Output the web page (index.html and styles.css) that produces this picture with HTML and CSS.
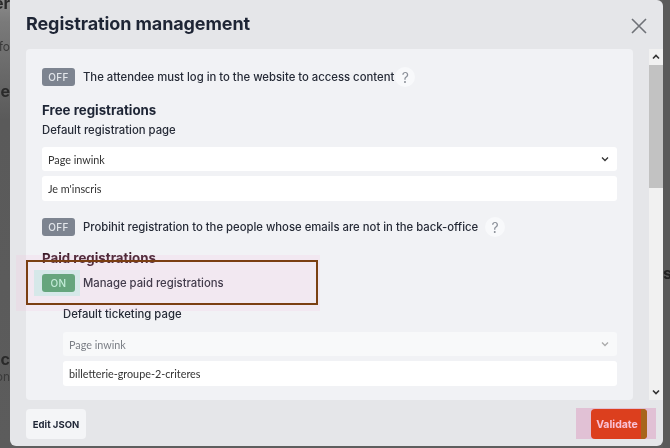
FILE: index.html
```html
<!DOCTYPE html>
<html lang="en">
<head>
<meta charset="utf-8">
<title>Registration management</title>
<link rel="stylesheet" href="styles.css">
</head>
<body>
<div class="page">
  <div class="page-left">
    <div class="bg-line bg-bold bg-top">Register</div>
    <div class="bg-line bg-small">Info</div>
    <div class="bg-line bg-bold bg-mid">The</div>
    <div class="bg-line bg-bold bg-low">Doc</div>
    <div class="bg-line bg-small">Non</div>
  </div>
  <div class="modal">
    <header class="modal-head">
      <h2 class="modal-title">Registration management</h2>
      <button class="close" aria-label="Close">
        <svg width="16" height="16" viewBox="0 0 16 16"><path d="M1 1 L15 15 M15 1 L1 15" stroke="#6f7278" stroke-width="1.6" fill="none"/></svg>
      </button>
    </header>
    <div class="modal-body">
      <div class="panel">
        <div class="toggle-row">
          <span class="toggle off">OFF</span>
          <span class="toggle-label">The attendee must log in to the website to access content</span>
          <span class="help help-1">?</span>
        </div>
        <h3 class="section-title">Free registrations</h3>
        <div class="field-label">Default registration page</div>
        <div class="select"><span>Page inwink</span><svg width="8" height="6" viewBox="0 0 8 6"><path d="M1 1.5 L4 4.5 L7 1.5" stroke="#333" stroke-width="1.3" fill="none"/></svg></div>
        <div class="input">Je m'inscris</div>
        <div class="toggle-row row-2">
          <span class="toggle off">OFF</span>
          <span class="toggle-label">Probihit registration to the people whose emails are not in the back-office</span>
          <span class="help">?</span>
        </div>
        <h3 class="section-title paid">Paid registrations</h3>
        <div class="toggle-row row-on">
          <span class="toggle on">ON</span>
          <span class="toggle-label">Manage paid registrations</span>
        </div>
        <div class="sub">
          <div class="field-label">Default ticketing page</div>
          <div class="select disabled"><span>Page inwink</span><svg width="8" height="6" viewBox="0 0 8 6"><path d="M1 1.5 L4 4.5 L7 1.5" stroke="#aaa" stroke-width="1.3" fill="none"/></svg></div>
          <div class="input">billetterie-groupe-2-criteres</div>
        </div>
      </div>
      <div class="scrollbar">
        <svg class="sb-arrow" width="8" height="6" viewBox="0 0 8 6"><path d="M1 4.5 L4 1.5 L7 4.5" stroke="#333" stroke-width="1.6" fill="none"/></svg>
        <div class="sb-thumb"></div>
        <div class="sb-track"></div>
        <svg class="sb-arrow" width="8" height="6" viewBox="0 0 8 6"><path d="M1 1.5 L4 4.5 L7 1.5" stroke="#333" stroke-width="1.6" fill="none"/></svg>
      </div>
    </div>
    <footer class="modal-foot">
      <button class="btn btn-light">Edit JSON</button>
      <button class="btn btn-primary">Validate</button>
    </footer>
  </div>
  <div class="page-right">
    <div class="bg-line bg-bold">s</div>
  </div>
</div>
<div class="hl-pink"></div>
<div class="hl-box"></div>
<div class="hl-cyan"></div>
<div class="hl-pink-btn"></div>
<div class="hl-brown-btn"></div>
</body>
</html>
```

FILE: styles.css
```css
* { box-sizing: border-box; }
html, body { margin: 0; padding: 0; }
body {
  width: 670px;
  height: 448px;
  overflow: hidden;
  background: #5e5e5e;
  font-family: "Inter", "Noto Sans", sans-serif;
  color: #1f2533;
  position: relative;
}
.page {
  display: flex;
  height: 448px;
}
.page-left {
  width: 10px;
  overflow: hidden;
  direction: rtl;
  background: linear-gradient(#8a8a8a 0, #7a7a7a 22px, #6a6a6a 70px, #5a5a5a 120px, #5c5c5c 100%);
}
.page-right {
  width: 7px;
  overflow: hidden;
  background: #5a5a5a;
  padding-top: 264px;
}
.page-right .bg-line { direction: ltr; color: #222; }
.bg-line {
  white-space: nowrap;
  font-size: 16px;
  color: #2a2a2a;
  line-height: 18px;
}
.bg-bold { font-weight: 700; }
.bg-small { font-size: 12px; color: #3a3a3a; }
.bg-top { margin-top: -6px; }
.bg-line.bg-small:nth-child(2) { margin-top: 26px; }
.bg-mid { margin-top: 26px; }
.bg-low { margin-top: 250px; }

.modal {
  width: 653px;
  height: 446px;
  background: #e5e6e9;
  border-radius: 0 6px 6px 6px;
  display: flex;
  flex-direction: column;
}
.modal-head {
  height: 49px;
  display: flex;
  align-items: center;
  justify-content: space-between;
  padding: 0 16px 2px 16px;
}
.modal-title {
  margin: 0;
  font-size: 18px;
  font-weight: 700;
  color: #1e2535;
  letter-spacing: -0.1px;
}
.close {
  border: 0;
  background: none;
  padding: 0;
  width: 16px;
  height: 16px;
  margin-top: 4px;
}
.close svg { display: block; }

.modal-body {
  display: flex;
  height: 351px;
  padding-left: 16px;
}
.panel {
  width: 607px;
  background: #f1f2f5;
  border-radius: 4px;
  padding: 19px 16px 0 16px;
}
.scrollbar {
  margin-left: 16px;
  width: 14px;
  background: #f1f1f1;
  display: flex;
  flex-direction: column;
  align-items: center;
  padding: 3px 0 3px;
}
.sb-arrow { display: block; flex: none; margin: 2px 0; }
.sb-thumb {
  width: 14px;
  height: 123px;
  background: #c2c2c2;
  margin-top: 3px;
}
.sb-track { flex: 1; }

.toggle-row {
  display: flex;
  align-items: center;
  height: 18px;
}
.toggle {
  width: 33px;
  height: 18px;
  border-radius: 3px;
  font-size: 10px;
  font-weight: 500;
  letter-spacing: 0.4px;
  display: flex;
  align-items: center;
  justify-content: center;
}
.toggle.off { background: #7d8490; color: #e4e7eb; }
.toggle.on { background: #5fa574; color: #d9f6e2; }
.toggle-label {
  margin-left: 8px;
  font-size: 11.3px;
  font-weight: 500;
  color: #262b37;
}
.help {
  margin-left: 7px;
  width: 20px;
  height: 20px;
  border-radius: 50%;
  background: #f8f9fb;
  color: #8b9099;
  font-size: 14px;
  display: flex;
  align-items: center;
  justify-content: center;
}
.help-1 { margin-left: 1px; }
.section-title {
  margin: 14px 0 0;
  font-size: 13.3px;
  font-weight: 700;
  line-height: 20px;
  color: #1e2535;
}
.field-label {
  font-size: 11.3px;
  font-weight: 500;
  line-height: 18px;
  margin-top: 1px;
  color: #262b37;
}
.select, .input {
  height: 24px;
  background: #fff;
  border-radius: 3px;
  font-family: "Lato", "Liberation Sans", sans-serif;
  font-size: 10.8px;
  color: #333;
  display: flex;
  align-items: center;
  justify-content: space-between;
  padding: 0 6px 0 6px;
}
.select { margin-top: 8px; }
.select svg { display: block; margin-right: 2px; }
.input { margin-top: 5px; height: 25px; }
.select.disabled { background: #f8f9fa; color: #7b7f86; }
.row-2 { margin-top: 17px; }
.section-title.paid { margin-top: 12px; color: #3a1a26; }
.row-on { margin-top: 6px; }
.sub { padding-left: 21px; margin-top: 13px; }
.sub .select { margin-top: 9px; }

.modal-foot {
  display: flex;
  justify-content: space-between;
  padding: 9px 16px 0 16px;
}
.btn {
  height: 30px;
  border: 0;
  border-radius: 4px;
  font-family: "Inter", "Noto Sans", sans-serif;
  font-size: 10.5px;
  font-weight: 700;
  padding: 0;
  white-space: nowrap;
}
.btn-light { background: #f4f5f7; color: #1e2535; width: 60px; font-size: 9.5px; }
.btn-primary { background: #e04b20; color: #fde6ea; width: 56px; padding-right: 4px; }

/* annotation overlays */
.hl-pink {
  position: absolute;
  left: 16px; top: 255px;
  width: 304px; height: 56px;
  background: rgba(255, 170, 215, 0.13);
}
.hl-box {
  position: absolute;
  left: 26px; top: 260px;
  width: 292px; height: 45px;
  border: 2px solid #7b3e12;
}
.hl-cyan {
  position: absolute;
  left: 34px; top: 270px;
  width: 46px; height: 26px;
  background: #e2fff7;
  mix-blend-mode: multiply;
}
.hl-pink-btn {
  position: absolute;
  left: 576px; top: 408px;
  width: 80px; height: 31px;
  background: #fbd6ea;
  mix-blend-mode: multiply;
}
.hl-brown-btn {
  position: absolute;
  left: 641px; top: 409px;
  width: 6px; height: 30px;
  background: #a7651c;
  border-radius: 0 4px 4px 0;
}
```
